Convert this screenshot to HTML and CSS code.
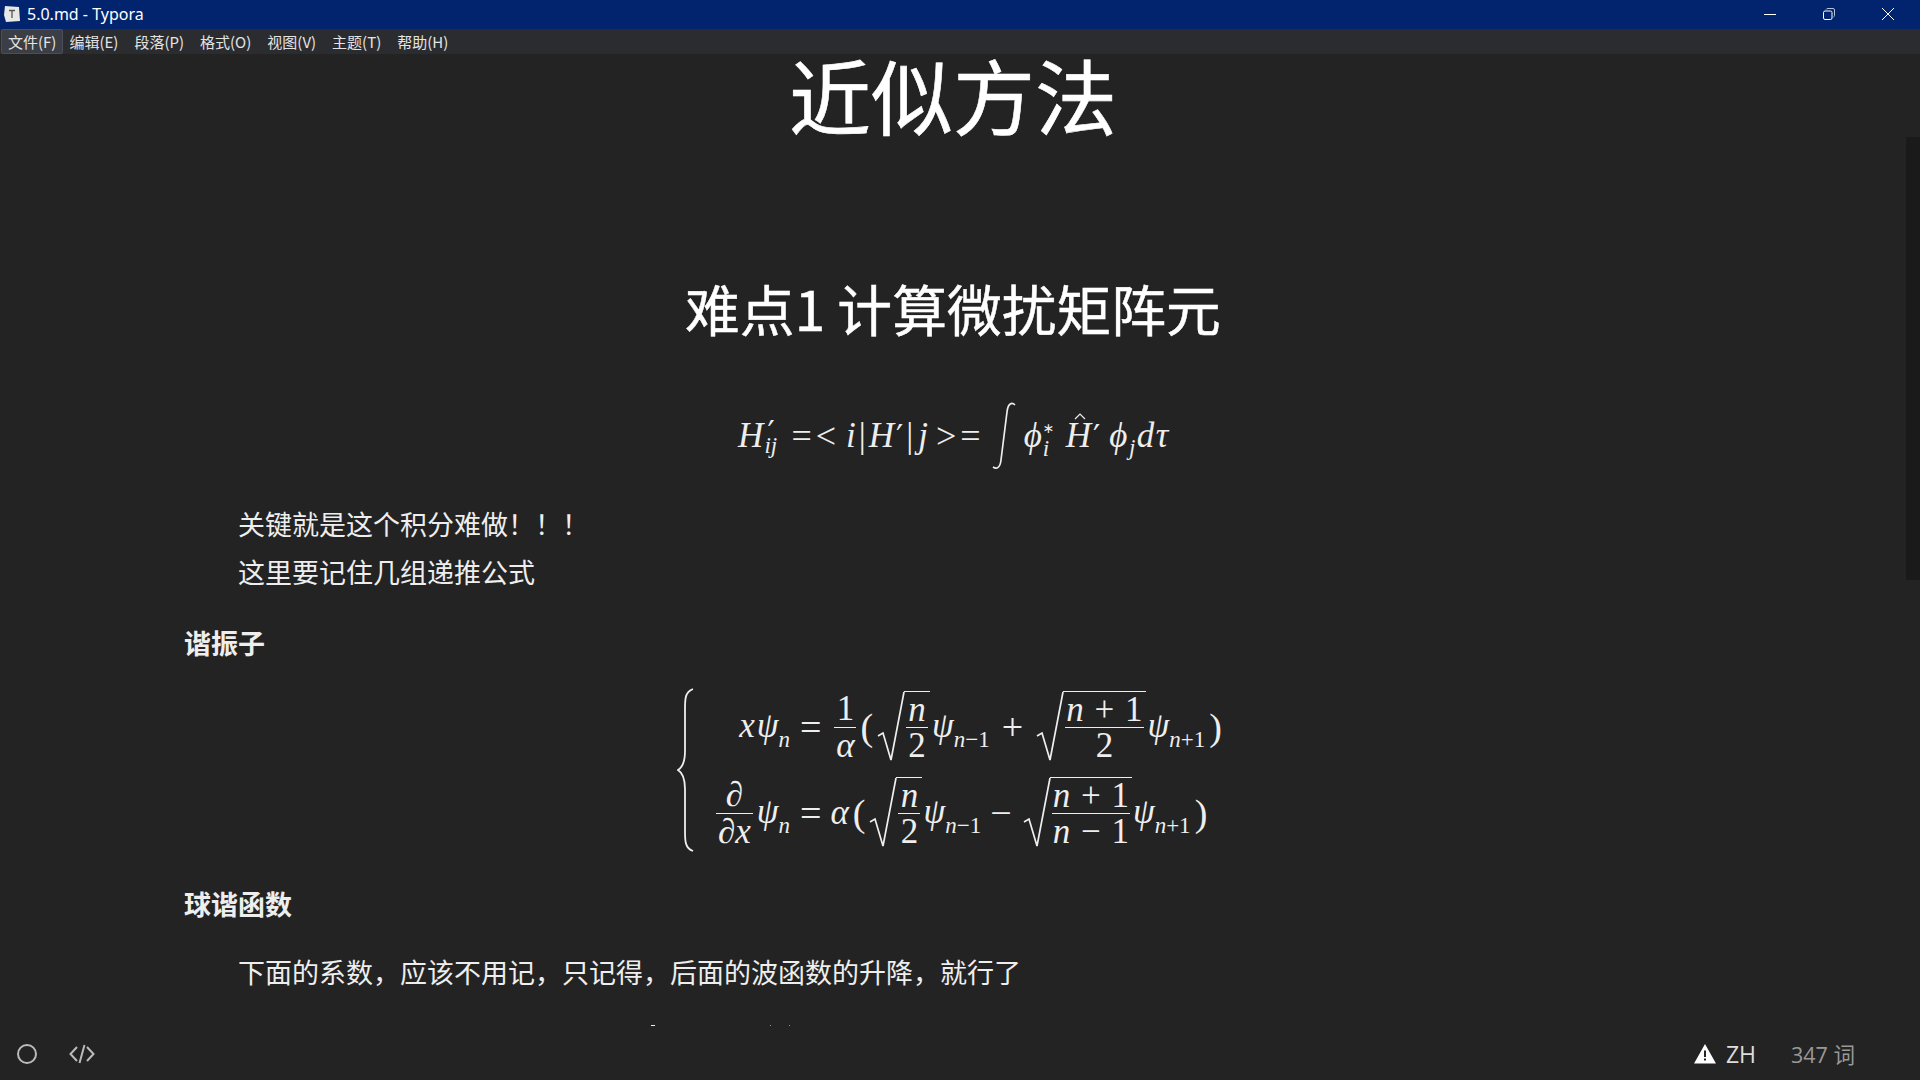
FILE: index.html
```html
<!DOCTYPE html>
<html lang="zh-CN">
<head>
<meta charset="UTF-8">
<title>5.0.md - Typora</title>
<link rel="stylesheet" href="styles.css">
</head>
<body>

<header class="titlebar">
  <svg class="app-icon" width="18" height="18" viewBox="0 0 18 18"><path d="M2 1 L16 2 L17 16 L3 17 L1 10 Z" fill="#e8e8e6"/><path d="M6 5.500H12M9 5.500V13" stroke="#555" stroke-width="1.300" fill="none"/></svg>
  <span class="title">5.0.md - Typora</span>
  <div class="win-buttons">
    <svg width="12" height="12" viewBox="0 0 12 12"><path d="M0 6.500H12" stroke="#fff" fill="none"/></svg>
    <svg width="12" height="12" viewBox="0 0 12 12"><rect x="0.500" y="3" width="8.500" height="8.500" rx="1.500" stroke="#fff" fill="none"/><path d="M3 1.500 Q3.500 0.500 5 0.500H10Q11.500 0.500 11.500 2V7.500Q11.500 8.500 10.500 9" stroke="#b9c3dc" fill="none"/></svg>
    <svg width="12" height="12" viewBox="0 0 12 12"><path d="M0 0L12 12M12 0L0 12" stroke="#fff" fill="none"/></svg>
  </div>
</header>

<nav class="menubar">
  <span class="menu-item active">文件(F)</span>
  <span class="menu-item">编辑(E)</span>
  <span class="menu-item">段落(P)</span>
  <span class="menu-item">格式(O)</span>
  <span class="menu-item">视图(V)</span>
  <span class="menu-item">主题(T)</span>
  <span class="menu-item">帮助(H)</span>
</nav>

<main class="editor">
  <div class="scroll-thumb"></div>
  <div class="doc">
    <h1>近似方法</h1>
    <h2>难点1 计算微扰矩阵元</h2>

    <div class="math eq-one">
      <span class="m"><i>H</i><span class="scripts"><sup class="prime">′</sup><sub><i>ij</i></sub></span></span>
      <span class="m op-eq">=&lt;</span>
      <span class="m m-mid"><i>i</i><span class="bar">|</span><i>H</i><span class="prime">′</span><span class="bar">|</span><i class="j-var">j</i></span>
      <span class="m op-gt">&gt;=</span>
      <svg class="integral" width="26" height="68" viewBox="0 0 26 68"><path d="M24 3 C21 0 17 1 16 10 L10 58 C9 67 5 67 2 65" stroke="#eee" stroke-width="1.700" fill="none"/></svg>
      <span class="m"><i>ϕ</i><span class="scripts scripts-narrow"><sup class="star">∗</sup><sub><i>i</i></sub></span></span>
      <span class="m hat-h"><i>H</i><svg class="hat" width="12" height="7" viewBox="0 0 12 7"><path d="M1 6L6 1L11 6" stroke="#eee" stroke-width="1.200" fill="none"/></svg><span class="prime">′</span></span>
      <span class="m phi-j"><i>ϕ</i><sub><i>j</i></sub><i>dτ</i></span>
    </div>

    <p class="para">关键就是这个积分难做！！！</p>
    <p class="para">这里要记住几组递推公式</p>

    <h4 class="sub-head first-head">谐振子</h4>

    <div class="math eq-cases">
      <svg class="brace" width="18" height="166" viewBox="0 0 18 166"><path d="M16 2 C8 5 8 12 8 22 V64 C8 75 6 80 1 83 C6 86 8 91 8 102 V144 C8 154 8 161 16 164" stroke="#eee" stroke-width="1.800" fill="none"/></svg>
      <div class="cases">
        <div class="lhs"><span class="term"><i class="x-var">x</i><i>ψ</i><sub><i>n</i></sub></span></div>
        <div class="eq-sign">=</div>
        <div class="rhs rhs-plus">
          <span class="frac frac-wide"><span>1</span><span><i>α</i></span></span>
          <span class="paren">(</span>
          <span class="sqrt">
            <svg width="28" height="72" viewBox="0 0 28 72" preserveAspectRatio="none"><path d="M1 45L6 42L14 69L27 1" stroke="#eee" stroke-width="1.700" fill="none"/></svg>
            <span class="frac radicand"><span><i>n</i></span><span>2</span></span>
          </span>
          <span class="term"><i>ψ</i><sub><i>n</i>−1</sub></span>
          <span class="binop">+</span>
          <span class="sqrt">
            <svg width="28" height="72" viewBox="0 0 28 72" preserveAspectRatio="none"><path d="M1 45L6 42L14 69L27 1" stroke="#eee" stroke-width="1.700" fill="none"/></svg>
            <span class="frac radicand"><span><i>n</i> + 1</span><span>2</span></span>
          </span>
          <span class="term"><i>ψ</i><sub><i>n</i>+1</sub></span>
          <span class="paren">)</span>
        </div>
        <div class="lhs">
          <span class="frac frac-dx"><span>∂</span><span>∂<i>x</i></span></span>
          <span class="term term-gap"><i>ψ</i><sub><i>n</i></sub></span>
        </div>
        <div class="eq-sign">=</div>
        <div class="rhs rhs-alpha">
          <span class="term"><i>α</i></span>
          <span class="paren">(</span>
          <span class="sqrt">
            <svg width="28" height="72" viewBox="0 0 28 72" preserveAspectRatio="none"><path d="M1 45L6 42L14 69L27 1" stroke="#eee" stroke-width="1.700" fill="none"/></svg>
            <span class="frac radicand"><span><i>n</i></span><span>2</span></span>
          </span>
          <span class="term"><i>ψ</i><sub><i>n</i>−1</sub></span>
          <span class="binop">−</span>
          <span class="sqrt">
            <svg width="28" height="72" viewBox="0 0 28 72" preserveAspectRatio="none"><path d="M1 45L6 42L14 69L27 1" stroke="#eee" stroke-width="1.700" fill="none"/></svg>
            <span class="frac radicand"><span><i>n</i> + 1</span><span><i>n</i> − 1</span></span>
          </span>
          <span class="term"><i>ψ</i><sub><i>n</i>+1</sub></span>
          <span class="paren">)</span>
        </div>
      </div>
    </div>

    <h4 class="sub-head">球谐函数</h4>
    <p class="para para-gap">下面的系数，应该不用记，只记得，后面的波函数的升降，就行了</p>
  </div>
</main>

<footer class="statusbar">
  <span class="clip-mark clip-a"></span>
  <span class="clip-mark clip-b"></span>
  <span class="clip-mark clip-c"></span>
  <svg class="circle-icon" width="20" height="20" viewBox="0 0 20 20"><circle cx="10" cy="10" r="9" stroke="#bbb" stroke-width="2" fill="none"/></svg>
  <svg class="code-icon" width="26" height="20" viewBox="0 0 26 20"><path d="M8 3L1.500 10L8 17M18 3L24.500 10L18 17M15.500 1L10.500 19" stroke="#bbb" stroke-width="2" fill="none"/></svg>
  <div class="status-right">
    <svg width="22" height="20" viewBox="0 0 22 20"><path d="M11 0L22 19.500H0Z" fill="#fff"/><path d="M10 6.500H12V13H10ZM10 14.500H12V16.500H10Z" fill="#232323"/></svg>
    <span class="lang">ZH</span>
    <span class="count">347 词</span>
  </div>
</footer>

</body>
</html>
```

FILE: styles.css
```css
html, body {
  margin: 0;
  height: 100%;
}
body {
  display: flex;
  flex-direction: column;
  height: 100vh;
  overflow: hidden;
  background: #232323;
  color: #eee;
  font-family: "Noto Sans CJK SC", "Noto Sans", sans-serif;
}

.titlebar {
  height: 29px;
  flex: none;
  display: flex;
  align-items: center;
  background: #02246f;
  color: #fff;
  font-family: "Noto Sans", "Noto Sans CJK SC", sans-serif;
  font-size: 16px;
  line-height: 26px;
}
.app-icon {
  margin-left: 3px;
  margin-top: -2px;
}
.title {
  margin-left: 6px;
  margin-top: -2px;
}
.win-buttons {
  margin-left: auto;
  margin-right: 26px;
  margin-top: -2px;
  display: flex;
  gap: 47px;
}

.menubar {
  height: 25px;
  flex: none;
  display: flex;
  padding-left: 1px;
  background: #2b2c30;
  color: #e4e4e4;
  font-size: 15px;
  line-height: 25px;
}
.menu-item {
  padding: 0 8px;
  white-space: nowrap;
}
.menu-item.active {
  padding: 0 6px;
  margin-right: -2px;
  background: #3b3e44;
  border: 1px solid #4a4e58;
  box-sizing: border-box;
  line-height: 23px;
  border-radius: 2px;
}

.editor {
  flex: 1;
  position: relative;
  overflow: hidden;
}
.scroll-thumb {
  position: absolute;
  right: 0;
  top: 83px;
  width: 14px;
  height: 443px;
  background: #1a1a1a;
}
.doc {
  padding-left: 184px;
  width: 1538px;
}

h1 {
  margin: 0;
  height: 86px;
  font-size: 82px;
  font-weight: 400;
  line-height: 80px;
  text-align: center;
  color: #fff;
  -webkit-text-stroke: 0.600px #fff;
}
h2 {
  margin: 132px 0 0;
  height: 70px;
  font-size: 54.800px;
  font-weight: 400;
  line-height: 70px;
  text-align: center;
  color: #fff;
  -webkit-text-stroke: 0.500px #fff;
}

.para {
  margin: 0 0 0 54px;
  font-size: 27px;
  line-height: 48px;
}
.para-gap {
  margin-top: 20px;
}
.sub-head {
  margin: 0;
  font-size: 27px;
  font-weight: 700;
  line-height: 48px;
}
.first-head {
  margin-top: 23px;
}

.math {
  font-family: "Liberation Serif", serif;
  font-size: 35px;
  display: flex;
  align-items: center;
  justify-content: center;
}
.math i {
  font-style: italic;
}
.math sub, .math sup {
  font-size: 23px;
  line-height: 1;
}

.eq-one {
  margin: 60px 0 30px;
  height: 68px;
  padding-left: 2px;
}
.m {
  white-space: nowrap;
  display: inline-flex;
  align-items: baseline;
}
.m sub {
  vertical-align: baseline;
  position: relative;
  top: 8px;
}
.scripts {
  display: inline-flex;
  flex-direction: column;
  margin-left: 1px;
  width: 16px;
  line-height: 1;
}
.scripts-narrow {
  width: 12px;
  position: relative;
  top: -12px;
}
.scripts sup {
  position: relative;
  top: -4px;
  left: 3px;
  height: 10px;
}
.scripts sub {
  position: relative;
  top: 4px;
  height: 10px;
}
.math .star {
  font-family: "DejaVu Sans", sans-serif;
  font-size: 14px;
  top: -2px;
  left: 0;
}
.math .prime {
  font-family: "DejaVu Sans", sans-serif;
  font-size: 32px;
  line-height: 1;
}
.m > .prime {
  margin-left: 2px;
}
.bar {
  margin: 0 3px;
}
.j-var {
  margin-left: 2px;
}
.m-mid {
  margin-left: 6px;
}
.op-eq {
  margin-left: 11px;
  font-size: 36px;
  letter-spacing: 4px;
}
.op-gt {
  margin-left: 8px;
  font-size: 36px;
  letter-spacing: 4px;
}
.integral {
  margin: 0 7px 0 6px;
}
.hat-h {
  position: relative;
  margin-left: 11px;
}
.hat {
  position: absolute;
  left: 8px;
  top: -3px;
}
.phi-j {
  margin-left: 9px;
  letter-spacing: 1.500px;
}

.eq-cases {
  margin: 17px 0 24px;
  justify-content: flex-start;
  padding-left: 493px;
}
.brace {
  flex: none;
  margin-right: 2px;
}
.cases {
  display: grid;
  grid-template-columns: 93px auto auto;
  grid-auto-rows: 86px;
  align-items: center;
}
.lhs, .rhs {
  display: flex;
  align-items: center;
  white-space: nowrap;
}
.lhs {
  justify-content: flex-end;
}
.x-var {
  margin-right: 2px;
}
.rhs-alpha {
  margin-left: -5px;
}
.rhs-alpha .paren:first-of-type {
  margin-left: -1px;
}
.eq-sign {
  padding: 0 13px 0 10px;
  font-size: 38px;
}
.frac {
  display: inline-flex;
  flex-direction: column;
  align-items: center;
  line-height: 36px;
}
.frac-wide {
  min-width: 22px;
}
.frac > span:first-child {
  border-bottom: 1.500px solid #eee;
  align-self: stretch;
  text-align: center;
  padding: 0 1px;
}
.frac-dx {
  padding: 0 2px;
}
.frac-dx > span:first-child {
  margin: 0 -2px;
}
.sqrt {
  display: inline-flex;
  align-items: stretch;
  margin-left: 2px;
}
.sqrt svg {
  display: block;
  margin-right: -1px;
}
.radicand {
  border-top: 1.500px solid #eee;
  padding: 0 2px;
  min-width: 22px;
  word-spacing: 2px;
  line-height: 35px;
}
.term {
  margin-left: 1px;
}
.term-gap {
  margin-left: 4px;
}
.term sub {
  font-size: 23px;
  position: relative;
  top: 2px;
  vertical-align: sub;
}
.paren {
  font-size: 38px;
  margin: 0 2px 0 4px;
}
.binop {
  margin: 0 9px;
  font-size: 38px;
}
.rhs-plus .binop {
  margin: 0 11px 0 12px;
}
.rhs-plus .radicand {
  margin-right: 1px;
}

.statusbar {
  height: 55px;
  flex: none;
  position: relative;
  display: flex;
  align-items: center;
  padding-left: 17px;
  padding-top: 2px;
  box-sizing: border-box;
  font-family: "Open Sans", "Noto Sans CJK SC", sans-serif;
  font-size: 23px;
}
.clip-mark {
  position: absolute;
  top: 0;
  height: 1px;
  background: #999;
}
.clip-a {
  left: 651px;
  width: 4px;
  background: #eee;
}
.clip-b {
  left: 770px;
  width: 1px;
}
.clip-c {
  left: 789px;
  width: 1px;
}
.code-icon {
  margin-left: 32px;
}
.status-right {
  margin-left: auto;
  margin-right: 65px;
  display: flex;
  align-items: center;
}
.lang {
  margin-left: 10px;
  color: #ddd;
}
.count {
  margin-left: 35px;
  color: #999;
  font-size: 21.500px;
}
```
